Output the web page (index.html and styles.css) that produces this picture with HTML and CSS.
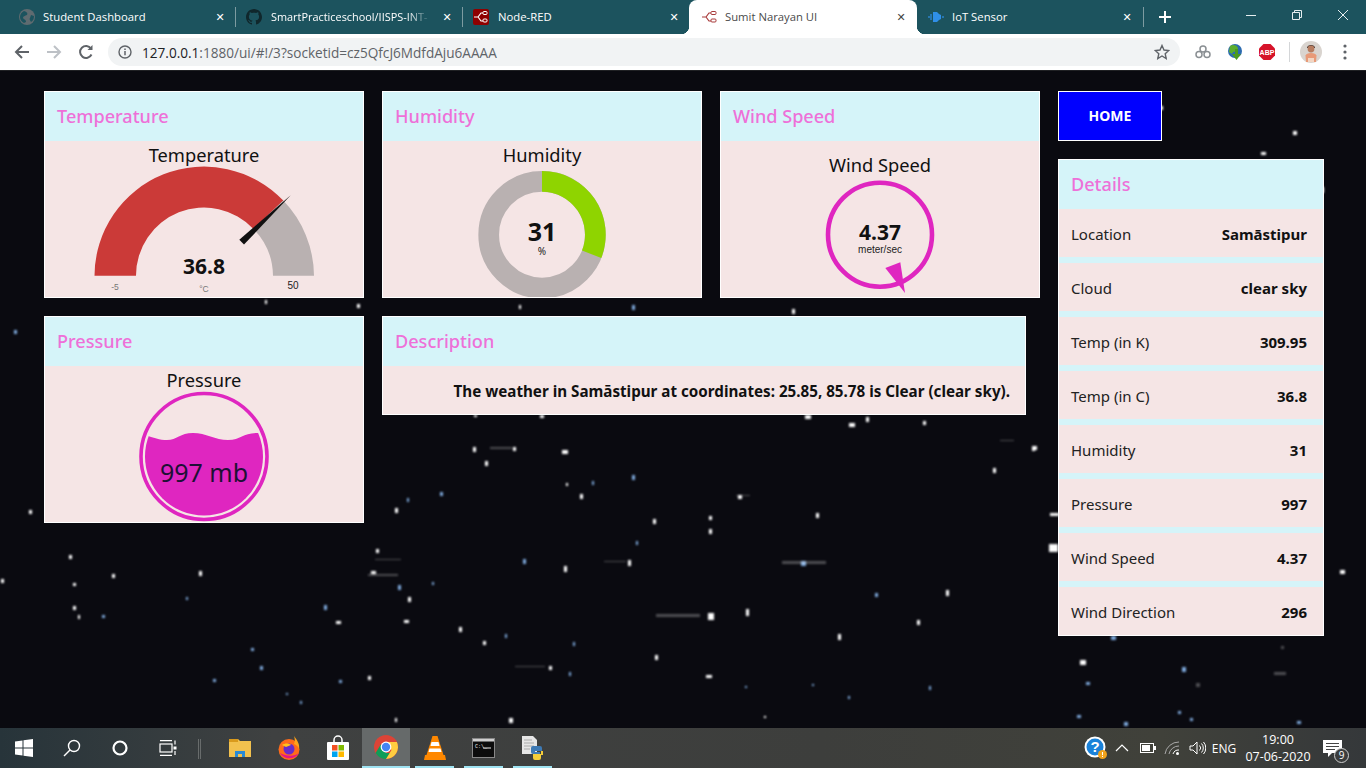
FILE: index.html
```html
<!DOCTYPE html>
<html lang="en">
<head>
<meta charset="utf-8">
<title>Sumit Narayan UI</title>
<link rel="stylesheet" href="styles.css">
</head>
<body>
<header class="chrome">
  <div class="tabstrip">
    <div class="tab tab-first">
      <svg class="favicon" viewBox="0 0 16 16"><circle cx="8" cy="8" r="8" fill="#5f6b70"/><path d="M5 2c3 1 4 2 3 4-2 1-4 1-4 3 1 2 3 1 3 4l-2 1c-2-1-4-3-4-6s2-5 4-6zM12 6l3 1c0 3-1 5-3 6-1-2-2-3-1-4z" fill="#1c535e"/></svg>
      <span class="tab-title">Student Dashboard</span><span class="tab-close">✕</span>
    </div>
    <i class="tab-sep"></i>
    <div class="tab tab-mid">
      <svg class="favicon" viewBox="0 0 16 16"><path fill="#10272c" d="M8 0C3.600 0 0 3.600 0 8c0 3.500 2.300 6.500 5.500 7.600.4.100.5-.2.5-.4v-1.400c-2.200.5-2.700-1-2.700-1-.4-.9-.9-1.200-.9-1.200-.7-.5.100-.5.100-.5.800.100 1.200.8 1.200.8.700 1.200 1.900.9 2.300.7.100-.5.300-.9.500-1.100-1.800-.2-3.600-.9-3.600-4 0-.9.300-1.600.8-2.100-.1-.2-.4-1 .1-2.100 0 0 .7-.2 2.200.8.600-.2 1.300-.3 2-.3s1.400.1 2 .3c1.500-1 2.200-.8 2.200-.8.400 1.100.200 1.900.100 2.100.5.600.8 1.300.8 2.100 0 3.100-1.900 3.700-3.700 3.900.3.300.6.800.6 1.500v2.200c0 .2.100.5.500.4C13.700 14.500 16 11.500 16 8c0-4.400-3.600-8-8-8z"/></svg>
      <span class="tab-title tab-title-fade">SmartPracticeschool/IISPS-INT-</span><span class="tab-close">✕</span>
    </div>
    <i class="tab-sep"></i>
    <div class="tab tab-mid">
      <svg class="favicon" viewBox="0 0 16 16"><rect width="16" height="16" rx="2" fill="#8f0000"/><path d="M1 8h4l3-4h2M5 8l3 4h2" fill="none" stroke="#fff" stroke-width="1.200"/><rect x="10" y="2.500" width="4" height="3" rx="1" fill="none" stroke="#fff"/><rect x="10" y="10" width="4" height="3" rx="1" fill="none" stroke="#fff"/></svg>
      <span class="tab-title">Node-RED</span><span class="tab-close">✕</span>
    </div>
    <div class="tab tab-active">
      <svg class="favicon" viewBox="0 0 16 16"><path d="M1 8h4l3-4h2M5 8l3 4h2" fill="none" stroke="#a83a3a" stroke-width="1.200"/><rect x="10" y="2.500" width="5" height="3" rx="1" fill="none" stroke="#a83a3a"/><rect x="10" y="10" width="5" height="3" rx="1" fill="none" stroke="#a83a3a"/></svg>
      <span class="tab-title">Sumit Narayan UI</span><span class="tab-close">✕</span>
    </div>
    <div class="tab tab-last">
      <svg class="favicon" viewBox="0 0 16 16"><path d="M5 3h4l2 2 2 1v4l-2 1-2 2H5z" fill="#2f8fe8"/><path d="M3 5v6M1 7v2M15 7v2" stroke="#2f8fe8" stroke-width="1.200"/></svg>
      <span class="tab-title">IoT Sensor</span><span class="tab-close">✕</span>
    </div>
    <i class="tab-sep"></i>
    <span class="new-tab">
      <svg width="12" height="12" viewBox="0 0 12 12"><path d="M6 0v12M0 6h12" stroke="#fff" stroke-width="2"/></svg>
    </span>
    <div class="window-controls">
      <svg width="12" height="12" viewBox="0 0 12 12"><path d="M1 6.500h10" stroke="#e6eef0"/></svg>
      <svg width="12" height="12" viewBox="0 0 12 12"><path d="M1.500 3.500h7v7h-7zM3.500 3.500v-2h7v7h-2" fill="none" stroke="#e6eef0"/></svg>
      <svg width="12" height="12" viewBox="0 0 12 12"><path d="M1 1l10 10M11 1L1 11" stroke="#e6eef0"/></svg>
    </div>
  </div>
  <div class="toolbar">
    <svg class="nav-icon" viewBox="0 0 16 16"><path d="M15 8H2M8 2L2 8l6 6" fill="none" stroke="#5f6368" stroke-width="2"/></svg>
    <svg class="nav-icon" viewBox="0 0 16 16"><path d="M1 8h13M8 2l6 6-6 6" fill="none" stroke="#bdc1c6" stroke-width="2"/></svg>
    <svg class="nav-icon" viewBox="0 0 16 16"><path d="M13.500 10.500A6 6 0 1 1 13 4.500" fill="none" stroke="#5f6368" stroke-width="2"/><path d="M14.500 1v5h-5z" fill="#5f6368"/></svg>
    <div class="omnibox">
      <svg class="info-icon" width="14" height="14" viewBox="0 0 14 14"><circle cx="7" cy="7" r="6" fill="none" stroke="#5f6368" stroke-width="1.400"/><path d="M7 6v4.200M7 3.500v1.500" stroke="#5f6368" stroke-width="1.500"/></svg>
      <span class="url"><b class="url-host">127.0.0.1</b>:1880/ui/#!/3?socketid=cz5QfcJ6MdfdAju6AAAA</span>
      <svg class="star" width="16" height="16" viewBox="0 0 16 16"><path d="M8 1.500l2 4.500 4.800.5-3.600 3.200 1 4.800L8 12l-4.200 2.500 1-4.800L1.200 6.500 6 6z" fill="none" stroke="#5f6368" stroke-width="1.400"/></svg>
    </div>
    <div class="extensions">
      <svg width="18" height="16" viewBox="0 0 18 16"><g fill="none" stroke="#8a8f93" stroke-width="1.500"><circle cx="9" cy="5" r="3"/><circle cx="5" cy="10.500" r="3"/><circle cx="13" cy="10.500" r="3"/></g></svg>
      <svg width="18" height="18" viewBox="0 0 18 18"><circle cx="9" cy="8" r="7" fill="#2c6bb0"/><path d="M4 3c3-2 7-1 8 2-1 4-5 3-6 6L3 9z" fill="#5cae2e"/><path d="M9 6h3v5h3l-4.500 6L6 11h3z" fill="#4b9b1e"/></svg>
      <svg width="18" height="18" viewBox="0 0 18 18"><path d="M5.500 1h7L17 5.500v7L12.500 17h-7L1 12.500v-7z" fill="#d6132a"/><text class="abp" x="9" y="11.700" text-anchor="middle">ABP</text></svg>
      <i class="ext-sep"></i>
      <svg class="avatar" width="22" height="22" viewBox="0 0 22 22"><circle cx="11" cy="11" r="11" fill="#d9d4cf"/><path d="M7 7c0-4 8-4 8 0z" fill="#3a2c28"/><circle cx="11" cy="8" r="3.400" fill="#b77c5f"/><path d="M11 12c-3 0-5 1-5.500 2.500L6 21h10l.500-6.500C16 13 14 12 11 12z" fill="#e89a78"/><path d="M8 17h6v4H8z" fill="#f3d6c3"/></svg>
      <svg class="menu-dots" width="4" height="16" viewBox="0 0 4 16"><g fill="#5f6368"><circle cx="2" cy="2" r="1.600"/><circle cx="2" cy="8" r="1.600"/><circle cx="2" cy="14" r="1.600"/></g></svg>
    </div>
  </div>
</header>

<main class="page">
  <svg class="stars" viewBox="0 0 1366 657" aria-hidden="true">
    <g class="star-layer">
      <path fill="#ffffff" d="M29 439h3v4h-3zM395 437h3v5h-3zM580 423h3v5h-3zM816 442h3v5h-3zM993 397h3v5h-3zM1032 375h3v5h-3zM923 350h3v4h-3zM805 344h6v4h-6zM849 352h6v4h-6zM866 346h3v5h-3zM513 376h3v4h-3zM562 379h6v4h-6zM485 390h3v5h-3zM473 376h3v5h-3zM566 412h2v3h-2zM738 424h4v4h-4zM653 448h3v5h-3zM709 445h3v4h-3zM709 458h3v5h-3zM628 489h3v6h-3zM564 495h3v6h-3zM946 519h3v6h-3zM708 542h6v7h-6zM746 538h3v7h-3zM838 563h3v6h-3zM917 549h3v5h-3zM1032 375h5v4h-5zM1050 442h9v3h-9zM1049 473h9v8h-9zM376 478h3v4h-3zM371 500h5v3h-5zM408 526h3v5h-3zM336 550h5v3h-5zM404 549h5v3h-5zM459 556h3v5h-3zM483 570h3v4h-3zM199 500h3v5h-3zM112 503h3v4h-3zM73 512h3v3h-3zM73 535h3v4h-3zM78 544h2v4h-2zM368 605h3v4h-3zM549 595h3v4h-3zM655 584h3v5h-3zM706 604h6v3h-6zM509 647h4v5h-4zM395 647h2v4h-2zM69 484h3v4h-3zM1 508h3v4h-3zM764 645h2v2h-2zM1080 589h6v5h-6zM1340 499h5v4h-5zM265 229h2v4h-2zM357 233h3v4h-3zM519 234h2v4h-2zM792 238h3v5h-3zM474 344h3v2h-3zM540 344h4v3h-4zM1160 35h3v4h-3zM1293 60h4v4h-4zM1261 81h5v3h-5zM1322 116h2v6h-2z"/>
      <path fill="#7faadd" d="M801 490h5v5h-5zM632 404h3v5h-3zM407 427h2v4h-2zM440 421h3v4h-3zM592 410h2v4h-2zM636 470h2v4h-2zM573 571h2v4h-2zM523 488h3v5h-3zM398 514h3v5h-3zM432 511h2v3h-2zM324 534h3v5h-3zM505 563h2v4h-2zM251 577h3v3h-3zM260 595h3v4h-3zM213 608h3v3h-3zM339 609h3v3h-3zM569 601h2v4h-2zM102 544h3v3h-3zM186 526h2v3h-2zM875 522h3v4h-3zM848 625h2v3h-2zM812 613h2v2h-2zM929 615h2v4h-2zM300 630h2v3h-2zM286 622h2v2h-2zM745 615h2v2h-2zM1111 565h5v4h-5zM1086 611h4v3h-4zM1182 596h4v5h-4zM1077 644h4v3h-4zM1124 651h4v4h-4zM1178 640h3v3h-3zM1190 647h3v3h-3zM1297 650h4v3h-4zM14 259h3v4h-3zM632 234h3v5h-3z"/>
      <path fill="#ffffff" opacity=".28" d="M736 424h14v1h-14zM604 490h22v1h-22zM782 490h44v3h-44zM656 543h44v3h-44zM375 488h26v1h-26zM368 503h30v2h-30zM225 410h12v1h-12zM490 376h22v2h-22zM1000 369h14v1h-14zM515 595h30v1h-30zM1274 601h12v3h-12zM1281 575h3v3h-3zM1196 612h4v4h-4z"/>
    </g>
  </svg>

  <div class="dashboard">
    <section class="card">
      <h2 class="card-title">Temperature</h2>
      <div class="card-body">
        <svg class="widget" viewBox="0 0 318 156">
          <text class="w-title" x="159" y="21" text-anchor="middle">Temperature</text>
          <path d="M49.500 134.700a109.500 109.500 0 0 1 188.800-75.100l-29.800 28.300a68 68 0 0 0-117.500 46.800z" fill="#cb3a38"/>
          <path d="M238.300 59.600a109.500 109.500 0 0 1 30.700 75.100h-41a68 68 0 0 0-19.500-46.800z" fill="#b9b1b1"/>
          <path d="M245.700 54.300L199 103.600l-4.700-4.800z" fill="#111"/>
          <text class="w-value" x="159" y="133" text-anchor="middle">36.8</text>
          <text class="w-small w-muted" x="70" y="149" text-anchor="middle">-5</text>
          <text class="w-small w-muted" x="159" y="151" text-anchor="middle">°C</text>
          <text class="w-small" x="248" y="148" text-anchor="middle">50</text>
        </svg>
      </div>
    </section>

    <section class="card">
      <h2 class="card-title">Humidity</h2>
      <div class="card-body">
        <svg class="widget" viewBox="0 0 318 156">
          <text class="w-title" x="159" y="21" text-anchor="middle">Humidity</text>
          <circle cx="159" cy="93.700" r="53.300" fill="none" stroke="#b9b1b1" stroke-width="20.700"/>
          <path d="M159 30a63.700 63.700 0 0 1 59.300 87l-19.300-7.500a43 43 0 0 0-40-58.800z" fill="#8fd400"/>
          <text class="w-value w-value-big" x="159" y="100" text-anchor="middle">31</text>
          <text class="w-unit" x="159" y="114" text-anchor="middle">%</text>
        </svg>
      </div>
    </section>

    <section class="card">
      <h2 class="card-title">Wind Speed</h2>
      <div class="card-body">
        <svg class="widget" viewBox="0 0 318 156">
          <text class="w-title" x="159" y="31" text-anchor="middle">Wind Speed</text>
          <circle cx="159" cy="93.700" r="52" fill="none" stroke="#df26c0" stroke-width="4.600"/>
          <path d="M164.300 127l15-5.700 4.700 30.700z" fill="#df26c0"/>
          <text class="w-value" x="159" y="99" text-anchor="middle">4.37</text>
          <text class="w-small w-sans-dark" x="159" y="112" text-anchor="middle">meter/sec</text>
        </svg>
      </div>
    </section>

    <section class="card">
      <h2 class="card-title">Pressure</h2>
      <div class="card-body">
        <svg class="widget" viewBox="0 0 318 156">
          <defs><clipPath id="tank"><circle cx="159" cy="90.500" r="59"/></clipPath></defs>
          <text class="w-title" x="159" y="21" text-anchor="middle">Pressure</text>
          <circle cx="159" cy="90.500" r="63" fill="none" stroke="#df26c0" stroke-width="3.600"/>
          <path clip-path="url(#tank)" d="M90 66C105 70 112 74 122 74S135 67 148 67 170 74 183 74 198 67 212 67L230 67V160H90z" fill="#df26c0"/>
          <text class="w-liquid" x="159" y="116" text-anchor="middle">997 mb</text>
        </svg>
      </div>
    </section>

    <section class="card card-wide">
      <h2 class="card-title">Description</h2>
      <p class="description">The weather in Samāstipur at coordinates: 25.85, 85.78 is Clear (clear sky).</p>
    </section>
  </div>

  <aside class="sidebar">
    <button class="home" type="button">HOME</button>
    <section class="details">
      <h2 class="card-title">Details</h2>
      <div class="detail-row"><span>Location</span><b>Samāstipur</b></div>
      <div class="detail-row"><span>Cloud</span><b>clear sky</b></div>
      <div class="detail-row"><span>Temp (in K)</span><b>309.95</b></div>
      <div class="detail-row"><span>Temp (in C)</span><b>36.8</b></div>
      <div class="detail-row"><span>Humidity</span><b>31</b></div>
      <div class="detail-row"><span>Pressure</span><b>997</b></div>
      <div class="detail-row"><span>Wind Speed</span><b>4.37</b></div>
      <div class="detail-row"><span>Wind Direction</span><b>296</b></div>
    </section>
  </aside>
</main>

<footer class="taskbar">
  <div class="task"><svg width="18" height="18" viewBox="0 0 18 18"><path fill="#fff" d="M0 2.500l7.500-1v7H0zM8.500 1.300L18 0v8.500H8.500zM0 9.500h7.500v7l-7.500-1zM8.500 9.500H18V18l-9.500-1.300z"/></svg></div>
  <div class="task"><svg width="18" height="18" viewBox="0 0 18 18"><circle cx="11" cy="7" r="5.500" fill="none" stroke="#fff" stroke-width="1.400"/><path d="M7 11l-6 6" stroke="#fff" stroke-width="1.500"/></svg></div>
  <div class="task"><svg width="16" height="16" viewBox="0 0 16 16"><circle cx="8" cy="8" r="6.500" fill="none" stroke="#fff" stroke-width="2.200"/></svg></div>
  <div class="task"><svg width="18" height="16" viewBox="0 0 18 16"><g fill="none" stroke="#fff" stroke-width="1.200"><path d="M1 .6h12M1 15.400h12"/><rect x="1" y="4" width="12" height="8"/><path d="M16 .6v4"/><path d="M16 11v4"/></g><rect x="14.500" y="6.500" width="3" height="3" fill="#fff"/></svg></div>
  <i class="task-divider"></i>
  <div class="task task-pinned"><svg width="24" height="20" viewBox="0 0 24 20"><path d="M1 1h9l2 2h11v16H1z" fill="#f2c14e"/><path d="M1 1h9v3H1z" fill="#d99a1c"/><path d="M7 13h10v6h-3v-3h-4v3H7z" fill="#2a8ad4"/></svg></div>
  <div class="task task-pinned"><svg width="24" height="24" viewBox="0 0 24 24"><circle cx="12" cy="13.500" r="10.500" fill="#ff6b1a"/><path d="M17 0c3 4 6 8 5 13-1-3-3-4-5-5 1-3 1-5 0-8z" fill="#ffa31a"/><circle cx="12" cy="13" r="5.500" fill="#6a2bc8"/><path d="M5 9c3-2 7-2 9 0l-5 2z" fill="#ffc21a"/><path d="M3 17c3 6 14 8 19 0-3 3-12 4-19 0z" fill="#e31587"/></svg></div>
  <div class="task task-pinned"><svg width="24" height="26" viewBox="0 0 24 26"><path d="M8 8V5a4 4 0 0 1 8 0v3" fill="none" stroke="#fff" stroke-width="1.500"/><rect x="1" y="7" width="22" height="18" rx="1" fill="#fff"/><rect x="6" y="10" width="5.500" height="5.500" fill="#f25022"/><rect x="12.500" y="10" width="5.500" height="5.500" fill="#7fba00"/><rect x="6" y="16.500" width="5.500" height="5.500" fill="#00a4ef"/><rect x="12.500" y="16.500" width="5.500" height="5.500" fill="#ffb900"/></svg></div>
  <div class="task task-active"><svg width="24" height="24" viewBox="0 0 24 24"><circle cx="12" cy="12" r="12" fill="#db4437"/><path d="M12 24a12 12 0 0 1-10.400-6L7 9l5 9h5z" fill="#0f9d58"/><path d="M12 7h10.900A12 12 0 0 1 12 24l5.500-9z" fill="#ffcd40"/><circle cx="12" cy="12" r="5.400" fill="#fff"/><circle cx="12" cy="12" r="4.200" fill="#4285f4"/></svg></div>
  <div class="task task-open"><svg width="22" height="26" viewBox="0 0 22 26"><path d="M8.500 1h5l6 19h-17z" fill="#ff8800"/><path d="M7.500 7h7l1 4h-9zM5.500 13.500h11l1 3.500h-13z" fill="#fff"/><path d="M1 20h20l1 5H0z" fill="#ff8800"/></svg></div>
  <div class="task task-open"><svg width="23" height="20" viewBox="0 0 23 20"><rect x=".5" y=".5" width="22" height="19" fill="#0c0c0c" stroke="#888"/><rect x="1" y="1" width="21" height="2.500" fill="#cfcfcf"/><text class="cmd" x="3" y="10">C:\_</text><path d="M11 10h8" stroke="#eee"/></svg></div>
  <div class="task task-open"><svg width="24" height="26" viewBox="0 0 24 26"><path d="M1 1h11l4 4v14H1z" fill="#e6e6e6"/><path d="M3 5h8M3 8h10M3 11h10M3 14h6" stroke="#aaa"/><path d="M14 11h5a2 2 0 0 1 2 2v3h-7v1h5v2h-7a2 2 0 0 1-2-2v-4a2 2 0 0 1 2-2z" fill="#3d7ab5"/><path d="M14 25h4a2 2 0 0 0 2-2v-3h2v-4h-2v3h-8v4a2 2 0 0 0 2 2z" fill="#f4cd3a"/></svg></div>
  <div class="tray">
    <svg width="24" height="24" viewBox="0 0 24 24"><circle cx="11" cy="11" r="10.500" fill="#fff"/><circle cx="11" cy="11" r="8.500" fill="#1a82d9"/><text class="help-q" x="11" y="16" text-anchor="middle">?</text><circle cx="18.500" cy="18.500" r="4.500" fill="#f2a31c"/><path d="M18.500 16v3.200M18.500 20v1" stroke="#fff"/></svg>
    <svg width="14" height="8" viewBox="0 0 14 8"><path d="M1 7l6-6 6 6" fill="none" stroke="#fff" stroke-width="1.200"/></svg>
    <svg width="16" height="10" viewBox="0 0 16 10"><rect x=".5" y=".5" width="13" height="9" fill="none" stroke="#fff"/><rect x="2" y="2" width="8" height="6" fill="#fff"/><rect x="14" y="3" width="2" height="4" fill="#fff"/></svg>
    <svg width="16" height="14" viewBox="0 0 16 14"><g fill="none" stroke="#aaa"><path d="M1 13A14 14 0 0 1 15 1"/><path d="M5 13A10 10 0 0 1 15 5"/></g><g fill="none" stroke="#fff"><path d="M9 13a6 6 0 0 1 6-4"/></g><circle cx="13.500" cy="12.500" r="1.500" fill="#fff"/></svg>
    <svg width="17" height="14" viewBox="0 0 17 14"><path d="M1 5h3l4-4v12l-4-4H1z" fill="none" stroke="#fff"/><path d="M10.500 4.500a3.500 3.500 0 0 1 0 5M12.500 2.500a6.500 6.500 0 0 1 0 9M14.500 1a9 9 0 0 1 0 12" fill="none" stroke="#fff"/></svg>
    <span class="tray-lang">ENG</span>
    <div class="clock"><span>19:00</span><span>07-06-2020</span></div>
    <div class="notify">
      <svg width="19" height="17" viewBox="0 0 19 17"><path d="M0 0h19v13H9l-4 4v-4H0z" fill="#fff"/><path d="M3 3.500h13M3 6.500h13M3 9.500h9" stroke="#444"/></svg>
      <span class="notify-badge">9</span>
    </div>
  </div>
</footer>
</body>
</html>
```

FILE: styles.css
```css
* { box-sizing: border-box; }
html, body { margin: 0; padding: 0; }
body {
  width: 1366px;
  height: 768px;
  overflow: hidden;
  display: flex;
  flex-direction: column;
  font-family: "Noto Sans", "Open Sans", sans-serif;
  background: #0a0a10;
}

/* browser chrome */
.chrome { flex: none; height: 71px; background: #fff; border-bottom: 1px solid #202124; }
.tabstrip { height: 34px; background: #1c535e; display: flex; align-items: stretch; padding-left: 8px; }
.tab {
  position: relative;
  width: 226px;
  padding: 0 8px 0 12px;
  display: flex;
  align-items: center;
  gap: 8px;
  color: #fff;
  font-size: 11.300px;
  font-family: "Open Sans", sans-serif;
}
.tab-first { width: 227px; padding-left: 11px; }
.tab-mid { padding-left: 10px; gap: 9px; }
.tab-active {
  width: 228px;
  padding-right: 9px;
  background: #fff;
  color: #4a4a4a;
  border-radius: 8px 8px 0 0;
}
.tab-active::before, .tab-active::after {
  content: "";
  position: absolute;
  bottom: 0;
  width: 8px;
  height: 8px;
}
.tab-active::before { left: -8px; background: radial-gradient(circle at 0 0, #1c535e 8px, #fff 8.500px); }
.tab-active::after { right: -8px; background: radial-gradient(circle at 100% 0, #1c535e 8px, #fff 8.500px); }
.tab-last { padding: 0 9px 0 11px; }
.favicon { width: 16px; height: 16px; flex: none; }
.tab-title { flex: 1; white-space: nowrap; overflow: hidden; padding-bottom: 2px; }
.tab-title-fade { font-size: 10.900px; mask-image: linear-gradient(90deg, #000 85%, transparent 100%); }
.tab-close { flex: none; font-size: 11px; width: 14px; text-align: center; color: #fff; font-family: "DejaVu Sans", sans-serif; }
.tab-active .tab-close { color: #444; }
.tab-sep { flex: none; width: 1px; height: 20px; align-self: center; background: #7d9ba1; }
.new-tab { flex: none; width: 42px; display: flex; align-items: center; justify-content: center; }
.window-controls { margin-left: auto; display: flex; align-items: center; gap: 34px; padding: 0 17px 5px 0; }
.toolbar { height: 36px; display: flex; align-items: center; padding-left: 14px; }
.nav-icon { width: 16px; height: 16px; margin-right: 16px; flex: none; }
.omnibox {
  width: 1072px;
  height: 28px;
  margin-left: -2px;
  border-radius: 14px;
  background: #f1f3f4;
  display: flex;
  align-items: center;
  padding: 0 10px;
  font-size: 13.600px;
  font-family: "Open Sans", sans-serif;
  color: #5f6368;
}
.info-icon { flex: none; }
.url { margin-left: 10px; flex: 1; white-space: nowrap; }
.url-host { font-weight: 400; color: #202124; }
.extensions { display: flex; align-items: center; margin-left: 14px; gap: 14px; }
.ext-sep { width: 1px; height: 20px; background: #d4d6d8; margin: 0 -4px 0 -1px; }
.menu-dots { margin-left: 7px; }
.abp { font: bold 7px "Liberation Sans", sans-serif; fill: #fff; }

/* dashboard */
.page {
  position: relative;
  flex: 1;
  display: flex;
  gap: 18px;
  align-items: flex-start;
  padding: 20px 0 0 44px;
  overflow: hidden;
}
.stars { position: absolute; left: 0; top: 0; width: 1366px; height: 657px; }
.star-layer { filter: blur(0.8px); }
.dashboard {
  position: relative;
  display: grid;
  grid-template-columns: repeat(3, 320px);
  grid-template-rows: 207px 207px;
  gap: 18px;
  align-items: start;
}
.card { height: 207px; background: #f5e5e5; border: 1px solid #fff; overflow: hidden; display: flex; flex-direction: column; }
.card-wide { grid-column: span 2; width: 644px; height: 99px; }
.card-title {
  margin: 0;
  height: 49px;
  flex: none;
  padding: 0 12px 2px;
  display: flex;
  align-items: center;
  background: #d5f4f9;
  color: #ee70d8;
  font-size: 18.100px;
  font-weight: 500;
}
.card-body { flex: 1; min-height: 0; }
.widget { display: block; width: 318px; height: 156px; overflow: visible; }
.w-title { font-size: 18.300px; fill: #111; }
.w-value { font-size: 21px; font-weight: 700; fill: #111; }
.w-value-big { font-size: 25px; }
.w-small { font-size: 10px; font-family: "Liberation Sans", sans-serif; fill: #222; }
.w-muted { font-size: 8.500px; fill: #777; }
.w-sans-dark { font-size: 10px; fill: #222; }
.w-unit { font-size: 10px; fill: #222; }
.w-liquid { font-size: 25px; fill: #1d1035; }
.description { margin: 0; flex: 1; display: flex; align-items: center; justify-content: flex-end; padding: 2px 15px 0 16px; font-size: 15.200px; font-weight: 700; color: #111; white-space: nowrap; }

/* sidebar */
.sidebar { position: relative; width: 266px; display: flex; flex-direction: column; gap: 18px; }
.home {
  width: 104px;
  height: 50px;
  padding: 0 0 2px;
  background: #0000ff;
  border: 1px solid #fff;
  color: #fff;
  font: 700 14px "Noto Sans", sans-serif;
}
.details { background: #d5f4f9; border: 1px solid #fff; display: flex; flex-direction: column; gap: 6px; }
.details .card-title { margin-bottom: -6px; }
.detail-row {
  height: 48px;
  background: #f5e5e5;
  padding: 2px 16px 0 12px;
  display: flex;
  align-items: center;
  justify-content: space-between;
  font-size: 15px;
  color: #222;
}
.detail-row b { font-weight: 700; color: #111; }

/* taskbar */
.taskbar {
  flex: none;
  height: 40px;
  display: flex;
  align-items: stretch;
  background: linear-gradient(90deg, #27343a 0%, #3f4141 20%, #3d3e3c 60%, #40413a 85%, #35383a 100%);
}
.task { width: 48px; flex: none; display: flex; align-items: center; justify-content: center; position: relative; }
.task-pinned, .task-open { width: 49px; }
.task-open::after { content: ""; position: absolute; left: 5px; right: 5px; bottom: 0; height: 2px; background: #9fe3f2; }
.task-active { width: 48px; background: #666a6a; border-bottom: 2px solid #9fe3f2; }
.task-divider { flex: none; width: 3px; margin: 11px 14px 9px 6px; border: 1px solid #686c6c; border-width: 0 1px; }
.cmd { font: 5px "Liberation Mono", monospace; fill: #eee; }
.tray {
  margin-left: auto;
  display: grid;
  grid-template-columns: 26px 26px 26px 22px 28px 26px 82px 28px;
  justify-items: center;
  align-items: center;
  padding-right: 19px;
  color: #fff;
  font-size: 12px;
  font-family: "Open Sans", sans-serif;
}
.help-q { font: 700 15px "Liberation Sans", sans-serif; fill: #fff; }
.clock { display: flex; flex-direction: column; align-items: center; line-height: 17px; font-size: 12.500px; }
.notify { position: relative; width: 20px; height: 20px; padding-top: 2px; }
.notify-badge {
  position: absolute;
  right: -6px;
  bottom: -5px;
  width: 15px;
  height: 15px;
  border-radius: 50%;
  background: #3b3d3d;
  border: 1px solid #cfcfcf;
  font-size: 10px;
  line-height: 13px;
  text-align: center;
}
```
